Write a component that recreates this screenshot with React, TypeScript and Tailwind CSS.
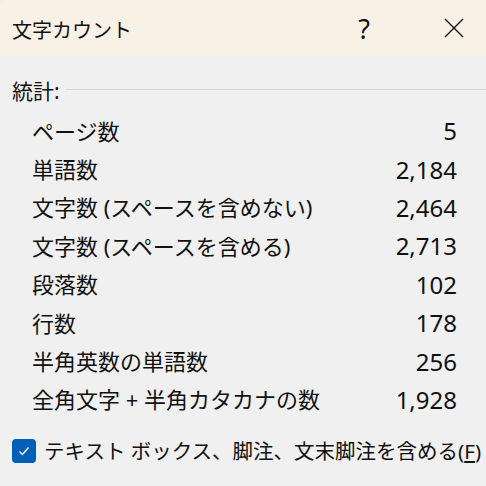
import React from 'react';

const rows: [string, string][] = [
  ['ページ数', '5'],
  ['単語数', '2,184'],
  ['文字数 (スペースを含めない)', '2,464'],
  ['文字数 (スペースを含める)', '2,713'],
  ['段落数', '102'],
  ['行数', '178'],
  ['半角英数の単語数', '256'],
  ['全角文字 + 半角カタカナの数', '1,928'],
];

const font = { fontFamily: '"Noto Sans", "Noto Sans CJK JP", sans-serif' };

export default function App() {
  return (
    <div className="w-[486px] h-[486px] bg-[#f0f0f0] text-[#111] overflow-hidden" style={font}>
      {/* Title bar */}
      <div className="h-[56px] bg-[#faf1e6] flex items-center pl-[12px] pr-[22px] rounded-tl-[8px]">
        <span className="text-[20px] leading-none mt-[5px]">文字カウント</span>
        <span className="ml-auto mr-[74px] text-[27px] leading-none">?</span>
        <svg width="20" height="20" viewBox="0 0 20 20" className="text-[#111]">
          <path d="M1 1 L19 19 M19 1 L1 19" stroke="currentColor" strokeWidth="1.4" fill="none" />
        </svg>
      </div>

      {/* Stats */}
      <div className="pt-[25px]">
        <div className="flex items-center pl-[12px]">
          <span className="text-[21px] leading-none">統計:</span>
          <div className="flex-1 h-px bg-[#d6d6d6] ml-[6px] -mt-[4px]" />
        </div>
        <div className="mt-[10px] pl-[32px] pr-[29px] flex flex-col">
          {rows.map(([label, value]) => (
            <div key={label} className="flex items-center justify-between h-[38.4px]">
              <span className="text-[22px]">{label}</span>
              <span className="text-[24px]">{value}</span>
            </div>
          ))}
        </div>
      </div>

      {/* Checkbox */}
      <div className="flex items-center pl-[12px] mt-[20px]">
        <div className="w-[24px] h-[24px] rounded-[4px] bg-[#005fb8] flex items-center justify-center">
          <svg width="14" height="14" viewBox="0 0 14 14">
            <path d="M2.5 7.5 L5.5 10.5 L11.5 3.5" stroke="white" strokeWidth="1.4" fill="none" />
          </svg>
        </div>
        <span className="ml-[8px] text-[20.5px] leading-none whitespace-nowrap">
          テキスト ボックス、脚注、文末脚注を含める(<span className="underline underline-offset-2">F</span>)
        </span>
      </div>
    </div>
  );
}
